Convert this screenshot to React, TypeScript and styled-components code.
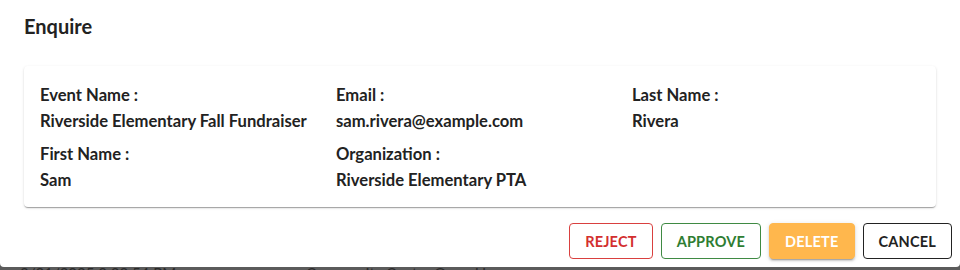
import styled, { createGlobalStyle } from 'styled-components';

const GlobalStyle = createGlobalStyle`
  html, body {
    margin: 0;
    padding: 0;
    background: #5b5b5b;
    font-family: Lato, "Open Sans", sans-serif;
  }
`;

interface Field {
  label: string;
  value: string;
}

const fields: Field[] = [
  { label: 'Event Name :', value: 'Riverside Elementary Fall Fundraiser' },
  { label: 'Email :', value: 'sam.rivera@example.com' },
  { label: 'Last Name :', value: 'Rivera' },
  { label: 'First Name :', value: 'Sam' },
  { label: 'Organization :', value: 'Riverside Elementary PTA' },
];

type Variant = 'reject' | 'approve' | 'delete' | 'cancel';

const App = () => {
  return (
    <Page>
      <GlobalStyle />
      <Dialog>
        <Title>Enquire</Title>
        <Content>
          <Card>
            <FieldGrid>
              {fields.map((f) => (
                <FieldItem key={f.label}>
                  <Label>{f.label}</Label>
                  <Value>{f.value}</Value>
                </FieldItem>
              ))}
            </FieldGrid>
          </Card>
        </Content>
        <Actions>
          <Button $variant="reject">Reject</Button>
          <Button $variant="approve">Approve</Button>
          <Button $variant="delete">Delete</Button>
          <Button $variant="cancel">Cancel</Button>
        </Actions>
      </Dialog>
      <Backdrop>
        <BehindRow>
          <span>3/21/2025 3:22:54 PM</span>
          <span>Community Center Open House</span>
        </BehindRow>
      </Backdrop>
    </Page>
  );
};

export default App;

const Page = styled.div`
  width: 960px;
  height: 270px;
  overflow: hidden;
  background: #5b5b5b;
`;

const Dialog = styled.div`
  background: #fff;
  height: 267px;
  box-sizing: border-box;
  border-radius: 0 0 4px 4px;
  display: flex;
  flex-direction: column;
`;

const Title = styled.h2`
  margin: 0;
  padding: 10px 24px 0;
  height: 53px;
  box-sizing: border-box;
  font-size: 20px;
  font-weight: 700;
  line-height: 32px;
  color: #222;
`;

const Content = styled.div`
  padding: 13px 24px 0;
`;

const Card = styled.div`
  background: #fff;
  border-radius: 4px;
  box-shadow: 0 2px 1px -1px rgba(0, 0, 0, 0.2), 0 1px 1px 0 rgba(0, 0, 0, 0.14),
    0 1px 3px 0 rgba(0, 0, 0, 0.12);
  padding: 16px 16px 14px;
  height: 141px;
  box-sizing: border-box;
`;

const FieldGrid = styled.div`
  display: grid;
  grid-template-columns: repeat(3, 296px);
  row-gap: 7px;
`;

const FieldItem = styled.div`
  display: flex;
  flex-direction: column;
`;

const Label = styled.span`
  font-size: 16.6px;
  font-weight: 700;
  line-height: 26px;
  color: #222;
  white-space: nowrap;
`;

const Value = styled.span`
  font-size: 16.6px;
  font-weight: 700;
  line-height: 26px;
  color: #222;
  white-space: nowrap;
`;

const Actions = styled.div`
  display: flex;
  justify-content: flex-end;
  gap: 8px;
  padding: 16px 8px 0;
`;

const palette: Record<Variant, { color: string; border: string; bg: string; shadow: string }> = {
  reject: { color: '#d32f2f', border: '#d9403f', bg: '#fff', shadow: 'none' },
  approve: { color: '#2e7d32', border: '#3f8a43', bg: '#fff', shadow: 'none' },
  delete: {
    color: '#fff',
    border: '#ffb74d',
    bg: '#ffb74d',
    shadow: '0 3px 1px -2px rgba(0,0,0,0.2), 0 2px 2px 0 rgba(0,0,0,0.14), 0 1px 5px 0 rgba(0,0,0,0.12)',
  },
  cancel: { color: '#222', border: '#222', bg: '#fff', shadow: 'none' },
};

const Button = styled.button<{ $variant: Variant }>`
  font-family: Lato, "Open Sans", sans-serif;
  font-size: 14.5px;
  font-weight: 700;
  text-transform: uppercase;
  letter-spacing: 0.2px;
  height: 36px;
  padding: 0 15px;
  border-radius: 4px;
  cursor: pointer;
  color: ${(p) => palette[p.$variant].color};
  background: ${(p) => palette[p.$variant].bg};
  border: 1px solid ${(p) => palette[p.$variant].border};
  box-shadow: ${(p) => palette[p.$variant].shadow};
`;

const Backdrop = styled.div`
  height: 3px;
  overflow: hidden;
`;

const BehindRow = styled.div`
  display: flex;
  gap: 130px;
  margin-top: -3px;
  padding-left: 20px;
  font-size: 15px;
  line-height: 18px;
  color: #2a2a2a;
`;
